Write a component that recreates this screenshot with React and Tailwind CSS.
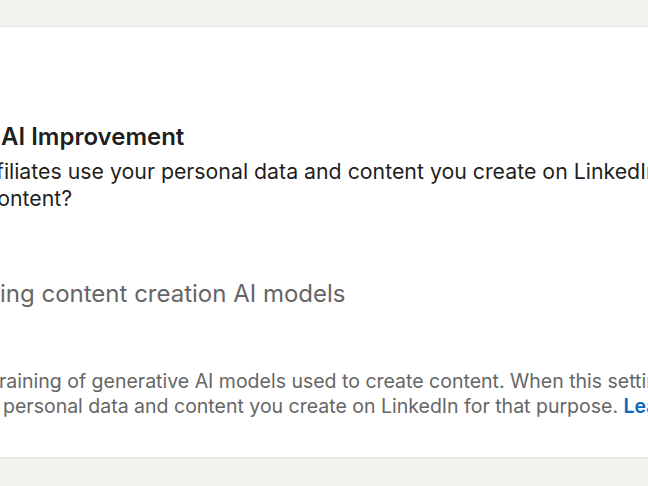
export default function App() {
  return (
    <div className="flex h-[486px] w-[648px] flex-col overflow-hidden bg-[#f3f2ef] font-['Inter',sans-serif]">
      <div className="h-[27px] shrink-0 border-b border-[#e4e3df]" />

      <section className="h-[432px] shrink-0 overflow-hidden border-b-2 border-[#e9e8e5] bg-white">
        <div className="whitespace-nowrap pt-[95px]">
          <h1 className="ml-[1px] text-[24px] font-semibold leading-[30px] text-black/90">
            AI Improvement
          </h1>
          <p className="ml-[-4px] mt-[6px] text-[21.3px] leading-[27px] text-black/90">
            filiates use your personal data and content you create on LinkedIn to train
            <br />
            <span className="ml-[-11px]">content?</span>
          </p>

          <h2 className="mt-[67px] text-[24px] leading-[30px] text-[#666]">
            ing content creation AI models
          </h2>

          <p className="ml-[-1px] mt-[60px] text-[19.5px] leading-[25px] text-[#666]">
            raining of generative AI models used to create content. When this setting is on
            <br />
            <span className="ml-[4px]">
              personal data and content you create on LinkedIn for that purpose.{" "}
              <a href="#" className="font-semibold text-[#0a66c2]">
                Learn more
              </a>
            </span>
          </p>
        </div>
      </section>

      <div className="flex-1" />
    </div>
  );
}
